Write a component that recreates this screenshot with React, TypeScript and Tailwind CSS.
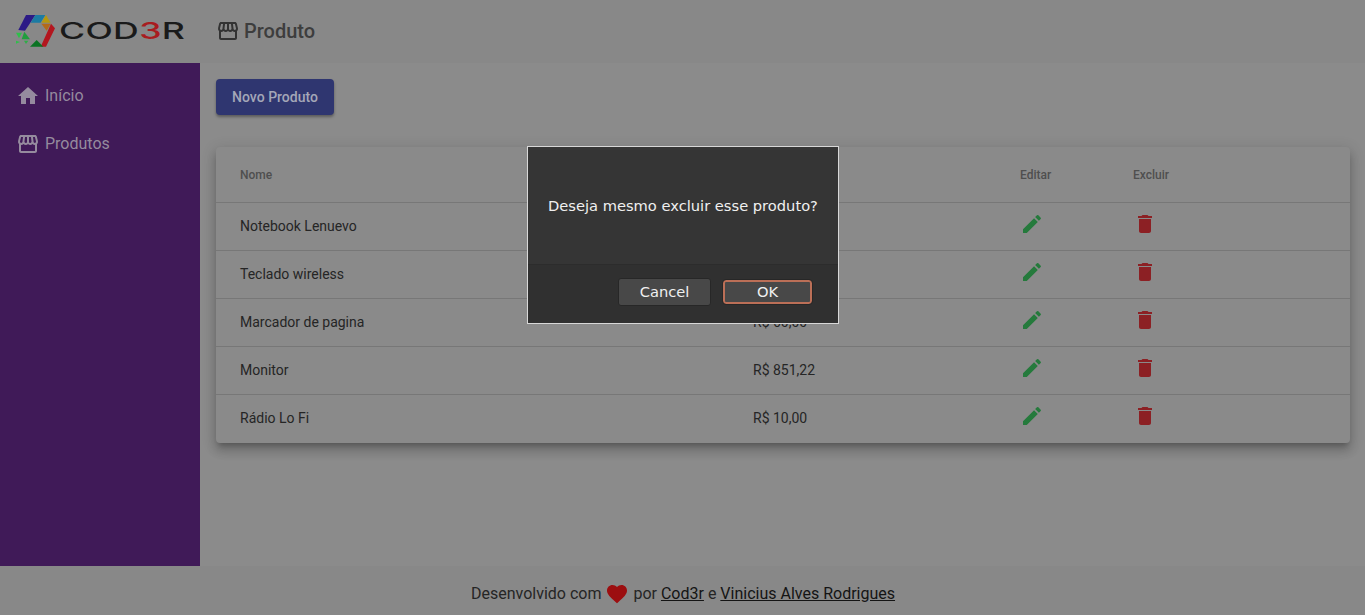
const homeP = "M10 20v-6h4v6h5v-8h3L12 3 2 12h3v8z";
const storeP = "M21.9 8.89l-1.05-4.37c-.22-.9-1-1.52-1.91-1.52H5.05c-.9 0-1.69.63-1.9 1.52L2.1 8.89c-.24 1.02-.02 2.06.62 2.88.08.11.19.19.28.29V19c0 1.1.9 2 2 2h14c1.1 0 2-.9 2-2v-6.94c.09-.09.2-.18.28-.28.64-.82.87-1.87.62-2.89zm-2.99-3.9l1.05 4.37c.1.42.01.84-.25 1.17-.14.18-.44.47-.94.47-.61 0-1.14-.49-1.21-1.14L16.98 5l1.93-.01zM13 5h1.96l.54 4.52c.05.39-.07.78-.33 1.07-.22.26-.54.41-.95.41-.67 0-1.22-.59-1.22-1.31V5zM8.49 9.52L9.04 5H11v4.69c0 .72-.55 1.31-1.29 1.31-.34 0-.65-.15-.89-.41-.25-.29-.37-.68-.33-1.07zm-4.45-.16L5.05 5h1.97l-.58 4.86c-.08.65-.6 1.14-1.21 1.14-.49 0-.8-.29-.93-.47-.27-.32-.36-.75-.26-1.17zM5 19v-6.03c.08.01.15.03.23.03.87 0 1.66-.36 2.24-.95.6.6 1.4.95 2.31.95.87 0 1.65-.36 2.23-.93.59.57 1.39.93 2.29.93.84 0 1.64-.35 2.24-.95.58.59 1.37.95 2.24.95.08 0 .15-.02.23-.03V19H5z";
const editP = "M3 17.25V21h3.75L17.81 9.94l-3.75-3.75L3 17.25zM20.71 7.04c.39-.39.39-1.02 0-1.41l-2.34-2.34a.9959.9959 0 0 0-1.41 0l-1.83 1.83 3.75 3.75 1.83-1.83z";
const delP = "M6 19c0 1.1.9 2 2 2h8c1.1 0 2-.9 2-2V7H6v12zM19 4h-3.5l-1-1h-5l-1 1H5v2h14V4z";
const heartP = "M12 21.35l-1.45-1.32C5.4 15.36 2 12.28 2 8.5 2 5.42 4.42 3 7.5 3c1.74 0 3.41.81 4.5 2.09C13.09 3.81 14.76 3 16.5 3 19.58 3 22 5.42 22 8.5c0 3.78-3.4 6.86-8.55 11.54L12 21.35z";

function Icon({ d, className }: { d: string; className: string }) {
  return (
    <svg viewBox="0 0 24 24" className={className} fill="currentColor">
      <path d={d} />
    </svg>
  );
}

function Logo() {
  return (
    <svg viewBox="0 0 150 126" className="h-[42px] w-[50px] shrink-0">
      <polygon points="48,15 76,15 60,40 45,62 25,60" fill="#2c1a86" />
      <polygon points="76,15 106,15 92,38 62,38" fill="#1c7ba3" />
      <polygon points="108,15 122,38 94,38" fill="#b5980f" />
      <polygon points="94,41 122,41 110,62" fill="#b46a1a" />
      <polygon points="123,41 135,55 108,110 92,110 112,66" fill="#b3161f" />
      <polygon points="80,90 100,110 60,110" fill="#0a7322" />
      <polygon points="18,68 36,68 27,85" fill="#2fbf4a" />
      <polygon points="43,65 60,88 35,88" fill="#1f9e3d" />
      <polygon points="18,92 30,96 18,101" fill="#2fbf4a" />
      <polygon points="42,92 55,92 48,102" fill="#2fae48" />
    </svg>
  );
}

const rows = [
  ["Notebook Lenuevo", "R$ 2.500,00"],
  ["Teclado wireless", "R$ 120,00"],
  ["Marcador de pagina", "R$ 60,00"],
  ["Monitor", "R$ 851,22"],
  ["Rádio Lo Fi", "R$ 10,00"],
];

export default function App() {
  return (
    <div className="relative h-[615px] w-[1365px] overflow-hidden bg-[#8b8b8b] font-['Roboto',sans-serif] text-[#252525]">
      <header className="flex h-[63px] items-center bg-[#888888] pb-[1px]">
        <div className="flex w-[216px] items-center pl-[10px]">
          <Logo />
          <span className="ml-[-1px] origin-left scale-x-[1.55] font-['Inter',sans-serif] text-[23px] font-medium leading-none tracking-[0.2px] text-[#1a1a1a]">
            COD<span className="text-[#a81c20]">3</span>R
          </span>
        </div>
        <Icon d={storeP} className="h-6 w-6 text-[#333333]" />
        <h1 className="ml-[4px] text-[20px] font-medium text-[#3d3d3d]">Produto</h1>
      </header>
      <div className="flex h-[503px]">
        <nav className="w-[200px] shrink-0 bg-[#401a58] pt-[8px] text-[#958b9e]">
          <div className="flex h-12 items-center pl-4 pt-[1px]">
            <Icon d={homeP} className="h-6 w-6" />
            <span className="ml-[5px] text-base">Início</span>
          </div>
          <div className="flex h-12 items-center pl-4 pt-[1px]">
            <Icon d={storeP} className="h-6 w-6" />
            <span className="ml-[5px] text-base">Produtos</span>
          </div>
        </nav>
        <main className="flex-1 pl-4 pr-[15px] pt-4">
          <button className="h-9 w-[118px] rounded bg-[#2f3670] text-sm font-medium text-[#a4a7b8] shadow-[0_2px_3px_rgba(0,0,0,0.35)]">
            Novo Produto
          </button>
          <div className="mt-[32px] rounded-[4px] bg-[#8a8a8a] shadow-[0_5px_5px_-3px_rgba(0,0,0,0.2),0_8px_10px_1px_rgba(0,0,0,0.14),0_3px_14px_2px_rgba(0,0,0,0.12)]">
            <div className="grid h-[56px] grid-cols-[513px_267px_113px_1fr] items-center border-b border-[#777777] pl-6 text-xs font-medium text-[#4f4f4f]">
              <span>Nome</span>
              <span>Preço</span>
              <span>Editar</span>
              <span>Excluir</span>
            </div>
            {rows.map((r, i) => (
              <div
                key={r[0]}
                className={`grid h-12 grid-cols-[513px_267px_113px_1fr] items-center pb-[2px] pl-6 text-sm ${i < rows.length - 1 ? "border-b border-[#777777]" : ""}`}
              >
                <span>{r[0]}</span>
                <span>{r[1]}</span>
                <Icon d={editP} className="h-6 w-6 -translate-y-[2px] text-[#257a3c]" />
                <Icon d={delP} className="h-6 w-6 -translate-y-[2px] text-[#8c2024]" />
              </div>
            ))}
          </div>
        </main>
      </div>
      <footer className="flex h-[49px] items-center justify-center bg-[#888888] pl-[1px] pt-[6px] text-base">
        <span>Desenvolvido com</span>
        <Icon d={heartP} className="mx-[4px] h-6 w-6 text-[#9c0e10]" />
        <span>
          por <a className="text-[#141414] underline">Cod3r</a> e <a className="text-[#141414] underline">Vinicius Alves Rodrigues</a>
        </span>
      </footer>

      <div className="absolute left-[527px] top-[146px] flex h-[178px] w-[312px] flex-col border border-[#d8d8d8] bg-[#353535] font-['DejaVu_Sans',sans-serif] text-[14.67px] text-[#f0f0f0]">
        <div className="flex flex-1 items-center pl-[20px] pt-[1px]">Deseja mesmo excluir esse produto?</div>
        <div className="flex h-[59px] items-start justify-end gap-[12px] border-t border-[#2c2c2c] bg-[#303030] pr-[26px] pt-[13px]">
          <button className="h-[28px] w-[93px] rounded-[3px] border border-[#272727] bg-[#484848]">Cancel</button>
          <button className="mt-[2px] h-[24px] w-[89px] rounded-[3px] border-2 border-[#bb6f57] bg-[#484848] leading-none outline-1 outline-[#272727]">OK</button>
        </div>
      </div>
    </div>
  );
}
